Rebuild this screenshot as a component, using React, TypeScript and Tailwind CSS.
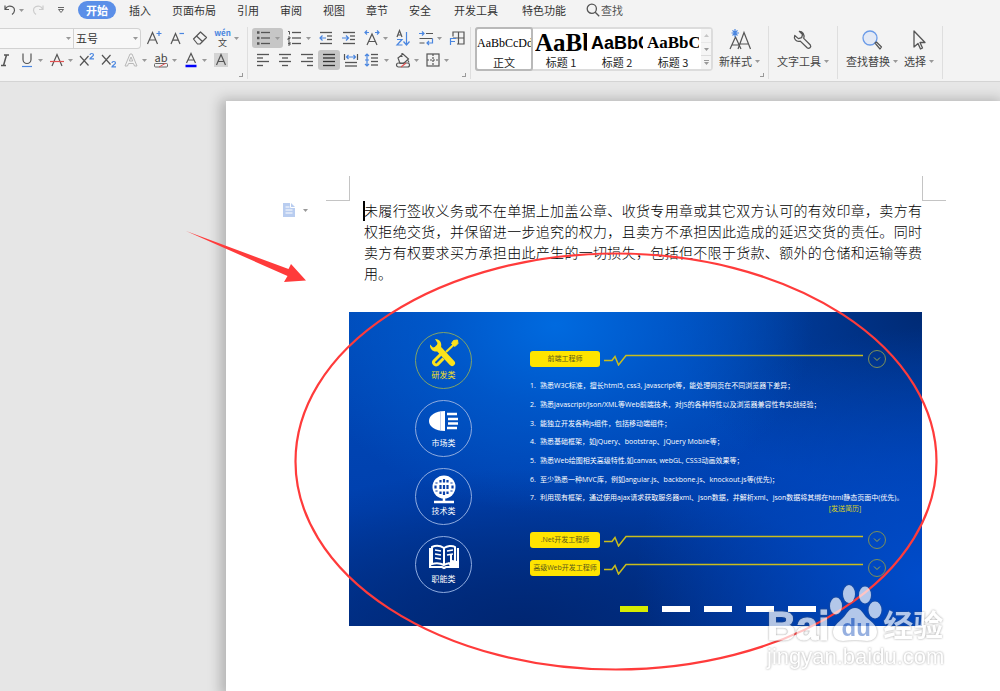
import React from "react";

type Kids = { children?: React.ReactNode };

const GRAY = "#555";
const BLUE = "#4a86e0";

function Icon({ children }: Kids) {
  return (
    <svg width="18" height="18" viewBox="0 0 18 18" fill="none" stroke={GRAY} strokeWidth="1.2" className="shrink-0">
      {children}
    </svg>
  );
}

function Caret() {
  return (
    <svg width="5" height="3" viewBox="0 0 5 3" className="shrink-0" fill="#999">
      <path d="M0 0h5L2.5 3z" />
    </svg>
  );
}

function Tool({
  label,
  size = "w-[22px]",
  menu = false,
  active = false,
  children,
}: Kids & { label: string; size?: string; menu?: boolean; active?: boolean }) {
  return (
    <button
      aria-label={label}
      title={label}
      className={`flex h-5 shrink-0 items-center rounded-[3px] ${active ? "bg-[#c6c6c6]" : ""}`}
    >
      <span className={`flex justify-center ${size}`}>{children}</span>
      {menu && (
        <span className="flex w-2">
          <Caret />
        </span>
      )}
    </button>
  );
}

const W = "w-[23px]";

function CornerMark() {
  return (
    <span className="flex h-2 items-start justify-end pr-1 pt-0.5">
      <span className="size-1 border-b border-r border-[#999]" />
    </span>
  );
}

function lines(rows: [number, number, number][], color = GRAY) {
  return rows.map(([x1, x2, y]) => <path key={`${x1}-${y}`} d={`M${x1} ${y}H${x2}`} stroke={color} strokeWidth="1.3" />);
}

function FontGroup() {
  return (
    <section className="w-[247px] shrink-0 overflow-hidden">
      <div className="flex h-[22px] items-center">
        <div className="mr-px flex h-[21px] rounded-r border-y border-r border-[#d2d2d2] bg-[#f8f8f8]">
          <label className="flex w-[73px] items-center pr-0.5">
            <select aria-label="字体" className="min-w-0 flex-1 appearance-none bg-transparent text-[11px] outline-none">
              <option></option>
            </select>
            <Caret />
          </label>
          <label className="flex w-[67px] items-center border-l border-[#d2d2d2] pl-0.5 pr-0.5">
            <select aria-label="字号" className="min-w-0 flex-1 appearance-none bg-transparent text-[11px] leading-4 outline-none">
              <option>五号</option>
            </select>
            <Caret />
          </label>
        </div>
        <Tool label="增大字号" size={W}>
          <Icon>
            <path d="M2.5 15 7.5 3.5 12.5 15M4.2 11h6.6" />
            <path d="M14 2v5M11.500 4.500h5" stroke={BLUE} />
          </Icon>
        </Tool>
        <Tool label="减小字号" size={W}>
          <Icon>
            <path d="M3 15 7.500 4.500 12 15M4.700 11.200h5.600" />
            <path d="M11.500 4.500H16" stroke={BLUE} />
          </Icon>
        </Tool>
        <Tool label="清除格式" size={W}>
          <Icon>
            <path d="m2.500 10 7-7 6 5.500-6.500 6.500H6.500zM5.500 7l6.500 6" strokeLinejoin="round" />
          </Icon>
        </Tool>
        <Tool label="拼音指南" size={W} menu>
          <span className="flex flex-col items-center">
            <span className="text-[8px] font-bold leading-[9px] text-[#4a86e0]">wén</span>
            <span className="text-[9px] leading-[11px] text-[#444]">文</span>
          </span>
        </Tool>
      </div>
      <div className="-ml-1.5 flex h-[22px] items-center">
        <Tool label="倾斜">
          <Icon>
            <path d="M8 4h5M5 14.500h5M10.500 4 7.500 14.500" strokeWidth="1.500" />
          </Icon>
        </Tool>
        <Tool label="下划线" menu>
          <Icon>
            <path d="M5 2.500v6a4 4 0 0 0 8 0v-6" />
            <path d="M4 15.500h10" stroke={BLUE} />
          </Icon>
        </Tool>
        <Tool label="删除线" menu>
          <Icon>
            <path d="M4 15 9 3.500 14 15" />
            <path d="M2 10.500h14" stroke="#e05252" />
          </Icon>
        </Tool>
        <Tool label="上标">
          <Icon>
            <path d="m2 5 8.500 9.500m0-9.500L2 14.500" />
            <path d="M12 4c0-2 3.500-2 3.500 0 0 1.300-3.500 2.500-3.500 3.800h4" stroke={BLUE} />
          </Icon>
        </Tool>
        <Tool label="下标">
          <Icon>
            <path d="m2 4 8.500 9.500M10.500 4 2 13.500" />
            <path d="M12 12c0-2 3.500-2 3.500 0 0 1.300-3.500 2.500-3.500 3.800h4" stroke={BLUE} />
          </Icon>
        </Tool>
        <Tool label="文字效果" menu>
          <Icon>
            <path d="M3 15 8 3h2l5 12h-2.500l-1-2.500h-5L5.500 15zM7.300 10h3.400L9 6z" stroke="#b8b8b8" strokeWidth="1" />
          </Icon>
        </Tool>
        <Tool label="突出显示" menu>
          <span className="flex flex-col text-[11px] leading-[11px] text-[#444]">
            ab
            <svg width="15" height="5" viewBox="0 0 15 5" fill="none" stroke="#666">
              <rect x=".5" y=".5" width="13" height="3.500" rx="1" />
              <path d="m5 4 7-4" stroke="#e05252" />
            </svg>
          </span>
        </Tool>
        <Tool label="字体颜色" menu>
          <Icon>
            <path d="M4.500 12 9 2.500 13.500 12M6.200 9h5.600" />
            <path d="M3.500 15h11" stroke="#0000fa" strokeWidth="2.500" />
          </Icon>
        </Tool>
        <Tool label="字符底纹">
          <Icon>
            <rect x="2" y="2" width="14" height="14" fill="#d4d4d4" stroke="none" />
            <path d="M4.500 14 9 3.500 13.500 14M6.200 10.500h5.600" />
          </Icon>
        </Tool>
      </div>
      <CornerMark />
    </section>
  );
}

function ParagraphGroup() {
  return (
    <section className="w-[223px] shrink-0 border-l border-[#dedede] pl-1">
      <div className="flex h-[22px] items-center">
        <Tool label="项目符号" size={W} menu active>
          <Icon>
            {lines([[6, 15, 3.5], [6, 15, 9], [6, 15, 14.5]])}
            <path d="M2 3.500h2.500M2 9h2.500M2 14.500h2.500" strokeWidth="2.500" />
          </Icon>
        </Tool>
        <Tool label="编号" size={W} menu>
          <Icon>
            {lines([[6, 15, 3.5], [6, 15, 9], [6, 15, 14.5]])}
            <path d="M2 2.500h1.500v3M2 8h2v1.500H2V11h2M2 13h2v3H2m0-1.500h2" strokeWidth="1" />
          </Icon>
        </Tool>
        <Tool label="减少缩进" size={W}>
          <Icon>
            {lines([[3, 15, 3.5], [10, 15, 7], [10, 15, 10.5], [3, 15, 14.5]])}
            <path d="M9 9H3m2.500-2.500L3 9l2.500 2.500" stroke={BLUE} />
          </Icon>
        </Tool>
        <Tool label="增加缩进" size={W}>
          <Icon>
            {lines([[3, 15, 3.5], [10, 15, 7], [10, 15, 10.5], [3, 15, 14.5]])}
            <path d="M2 9h6.500M6 6.500 8.500 9 6 11.500" stroke={BLUE} />
          </Icon>
        </Tool>
        <Tool label="字符缩放" size={W} menu>
          <Icon>
            <path d="M4 16 9 5l5 11M5.800 12.500h6.400" />
            <path d="M2 3.500h4M4 1.500l-2 2 2 2M16 3.500h-4M14 1.500l2 2-2 2" stroke={BLUE} />
          </Icon>
        </Tool>
        <Tool label="排序" size={W}>
          <Icon>
            <path d="M3 8 5.500 1.500 8 8M4 6h3" />
            <path d="M3 10.500h5L3 16h5.500M12.500 3v13M9.500 12.500l3 3.500 3-3.500" stroke={BLUE} />
          </Icon>
        </Tool>
        <Tool label="显示标记" size={W} menu>
          <Icon>
            <path d="M9 4.500h7M2.500 9.500h13M2.500 14h5" />
            <path d="M2 4.500h5M5 2.500l2 2-2 2M15.500 9.500V14H10m2-2-2 2 2 2" stroke={BLUE} />
          </Icon>
        </Tool>
        <Tool label="制表位" size={W}>
          <Icon>
            <path d="M5 7.500V3h11v12H9M10.500 3v12M5 9h11" />
            <path d="M2.500 16V9.500H8M2.500 12.500H7" stroke={BLUE} />
          </Icon>
        </Tool>
      </div>
      <div className="flex h-[22px] items-center">
        <Tool label="左对齐">
          <Icon>{lines([[3, 15, 3.5], [3, 9, 7], [3, 15, 10.5], [3, 9, 14.5]])}</Icon>
        </Tool>
        <Tool label="居中">
          <Icon>{lines([[3, 15, 3.5], [6, 12, 7], [3, 15, 10.5], [6, 12, 14.5]])}</Icon>
        </Tool>
        <Tool label="右对齐">
          <Icon>{lines([[3, 15, 3.5], [9, 15, 7], [3, 15, 10.5], [9, 15, 14.5]])}</Icon>
        </Tool>
        <Tool label="两端对齐" active>
          <Icon>{lines([[3, 15, 3.5], [3, 15, 7], [3, 15, 10.5], [3, 15, 14.5]], "#333")}</Icon>
        </Tool>
        <Tool label="分散对齐">
          <Icon>
            {lines([[3, 15, 11.5], [3, 15, 15]])}
            <path d="M2.500 3v6M15.500 3v6" />
            <path d="M4.500 6h9M6.500 4l-2 2 2 2M11.500 4l2 2-2 2" stroke={BLUE} />
          </Icon>
        </Tool>
        <Tool label="行距" menu>
          <Icon>
            {lines([[7, 14, 3.5], [7, 14, 7], [7, 14, 10.5], [7, 14, 14]])}
            <path d="M3 3v12M1 5l2-2 2 2M1 13l2 2 2-2M1 9h4" stroke={BLUE} />
          </Icon>
        </Tool>
        <Tool label="底纹颜色" menu>
          <Icon>
            <path d="m4 7 5-4 5.500 5-5 4.500H6zM8 2v4M14 9.500l1 2" />
            <rect x="2.500" y="12" width="13" height="4" rx="2" />
            <path d="m7 16 5-4" stroke="#e05252" />
          </Icon>
        </Tool>
        <Tool label="边框" menu>
          <Icon>
            <rect x="3" y="3" width="12" height="12" />
            <path d="M9 3v12M3 9h12" strokeDasharray="2 1" />
          </Icon>
        </Tool>
      </div>
      <CornerMark />
    </section>
  );
}

const styles = [
  { name: "正文", sample: "AaBbCcDd", look: "font-['Liberation_Serif',serif] text-[12px]" },
  { name: "标题 1", sample: "AaBb", look: "font-['Liberation_Serif',serif] text-[25px] font-bold" },
  { name: "标题 2", sample: "AaBbC", look: "font-['Liberation_Sans',sans-serif] text-[18px] font-bold" },
  { name: "标题 3", sample: "AaBbCc", look: "font-['Liberation_Serif',serif] text-[17px] font-bold" },
];

function BigTool({ label, children }: Kids & { label: string }) {
  return (
    <button className="flex shrink-0 flex-col items-start text-[11px] leading-4 text-[#444]">
      <span className="flex h-[26px] w-full items-center justify-center">{children}</span>
      <span className="flex items-center gap-[3px]">
        {label}
        <Caret />
      </span>
    </button>
  );
}

function StyleGroup() {
  return (
    <section className="flex shrink-0 items-end border-l border-[#dedede] pl-1">
      <div className="flex h-[44px] self-start rounded border-2 border-[#dcdcdc] bg-white">
        {styles.map((s, i) => (
          <button
            key={s.name}
            className={`-my-0.5 flex flex-col items-center justify-end overflow-hidden rounded-[3px] border-2 ${i === 0 ? "-ml-0.5 w-[58px] border-[#b9b9b9]" : "w-14 border-transparent"}`}
          >
            <span className={`flex h-6 w-full items-center overflow-hidden whitespace-nowrap leading-6 text-black ${s.look}`}>
              {s.sample}
            </span>
            <span className="text-[11px] leading-[14px] text-[#222]">{s.name}</span>
          </button>
        ))}
        <div className="flex w-[10px] flex-col divide-y divide-[#dcdcdc] bg-[#f5f5f5]">
          <button aria-label="上一行" className="flex flex-1 items-center justify-center opacity-50">
            <svg width="5" height="3" viewBox="0 0 5 3" fill="#999">
              <path d="M0 3h5L2.500 0z" />
            </svg>
          </button>
          <button aria-label="下一行" className="flex flex-1 items-center justify-center"><Caret /></button>
          <button aria-label="更多样式" className="flex flex-1 flex-col items-center justify-center gap-px">
            <span className="h-px w-[5px] bg-[#999]" />
            <Caret />
          </button>
        </div>
      </div>
      <div className="flex self-start pl-1.5">
        <BigTool label="新样式">
          <svg width="24" height="24" viewBox="0 0 24 24" fill="none" stroke={GRAY} strokeWidth="1.200">
            <path d="m2 21 5.500-12L13 21M4 17h7M10 21l6-16.500L22.500 21M12 16h9" />
            <path d="M7 1v8M3.500 5h7.500M4.500 2.300l5 5.200M9.500 2.300l-5 5.200" stroke={BLUE} />
          </svg>
        </BigTool>
      </div>
      <div className="w-2">
        <CornerMark />
      </div>
    </section>
  );
}

function Ribbon() {
  const first = ["开始", "插入", "页面布局", "引用", "审阅", "视图", "章节", "安全"];
  const second = ["开发工具", "特色功能"];
  return (
    <header className="relative z-10 overflow-hidden border-b border-[#d4d4d4] bg-[#f3f3f3] pb-0.5 text-[#333]">
      <nav className="flex h-5 items-center text-[11px]">
        <div className="flex w-[78px] shrink-0 items-center">
          <button aria-label="撤销" className="flex w-6 items-center justify-between pl-1">
            <svg width="12" height="12" viewBox="0 0 12 12" fill="none" stroke="#555" strokeWidth="1.200">
              <path d="M1 1.500v4h4M1.500 5C3 2 6 1.500 8.500 2.800c3 1.700 2.500 5.500-.5 7.700" />
            </svg>
            <Caret />
          </button>
          <button aria-label="恢复" className="flex w-7 justify-center">
            <svg width="12" height="12" viewBox="0 0 12 12" fill="none" stroke="#ccc" strokeWidth="1.200">
              <path d="M11 1.500v4H7M10.500 5C9 2 6 1.500 3.500 2.800.5 4.500 1 8.300 4 10.500" />
            </svg>
          </button>
          <button aria-label="自定义快速访问" className="flex flex-col items-center gap-px pl-1.5">
            <span className="h-px w-1.5 bg-[#666]" />
            <svg width="6" height="4" viewBox="0 0 6 4" fill="none" stroke="#666"><path d="m.5.500 2.500 3 2.500-3z" /></svg>
          </button>
        </div>
        <div className="flex shrink-0 gap-[5px]">
          {first.map((t, i) => (
            <button key={t} className={`h-[18px] rounded-full px-2 leading-4 ${i === 0 ? "bg-[#5b8fe8] font-bold text-white" : ""}`}>
              {t}
            </button>
          ))}
        </div>
        <div className="flex shrink-0 gap-2 pl-[7px]">
          {second.map((t) => (
            <button key={t} className="h-[18px] px-2 leading-4">
              {t}
            </button>
          ))}
          <button className="-ml-1 flex h-[18px] items-center gap-px px-2 leading-4 text-[#555]">
            <svg width="14" height="14" viewBox="0 0 14 14" fill="none" stroke="#555" strokeWidth="1.300">
              <circle cx="5.800" cy="5.800" r="4.600" />
              <path d="m9.200 9.200 4 4" />
            </svg>
            查找
          </button>
        </div>
      </nav>
      <div className="mt-1.5 flex h-[53px]">
        <div className="flex pt-px">
          <FontGroup />
          <ParagraphGroup />
          <StyleGroup />
        </div>
        <div className="flex shrink-0 border-l border-[#dedede] px-2 pt-px">
          <BigTool label="文字工具">
            <svg width="22" height="22" viewBox="0 0 24 24" fill="none" stroke={GRAY} strokeWidth="1.400" strokeLinejoin="round">
              <path d="M8 2.500 11.500 6 10.500 9.500 7 10.500 3 7C1.500 10.500 4.500 14.500 9 13.200l7.500 7.300c2 1.800 5-.8 3.500-3l-7.200-7.300C14 6 11.500 2.500 8 2.500z" />
            </svg>
          </BigTool>
        </div>
        <div className="flex shrink-0 gap-1.5 border-x border-[#dedede] px-2 pt-px">
          <BigTool label="查找替换">
            <svg width="22" height="22" viewBox="0 0 22 22" fill="none">
              <circle cx="9" cy="9" r="7" fill="#e3e9f5" stroke="#6b9be8" strokeWidth="1.300" />
              <path d="m14 14 1.500-1 5 5-1.500 2z" stroke="#555" strokeWidth="1.200" strokeLinejoin="round" />
            </svg>
          </BigTool>
          <BigTool label="选择">
            <svg width="22" height="22" viewBox="0 0 22 22" fill="none" stroke={GRAY} strokeWidth="1.300" strokeLinejoin="round">
              <path d="M6 2v16l4-3.500 2.500 5.500 2-1-2.500-5.500H17z" />
            </svg>
          </BigTool>
        </div>
      </div>
    </header>
  );
}

const categories: { name: string; art: React.ReactNode }[] = [
  {
    name: "研发类",
    art: (
      <>
        <path d="m9 9 14 15" stroke="currentColor" strokeWidth="6" strokeLinecap="round" />
        <path d="M6 0c5 0 7 4 6 8.500l-4 4C4 13 .500 10 1 5.500l3 3 3.500-1L8.500 4z" fill="currentColor" />
        <path d="M26 4.500 17 13" stroke="currentColor" strokeWidth="2.200" />
        <path d="m22.500 4.500 2-3 4-.500.5 3.500-3 3z" fill="currentColor" stroke="currentColor" />
        <path d="m12 15-7 7c-1.500 2 1 5 3.500 3.500l6-6" stroke="currentColor" strokeWidth="3" />
      </>
    ),
  },
  {
    name: "市场类",
    art: (
      <>
        <path d="M16 4v20C6 24 0 19.500 0 14S6 4 16 4z" fill="currentColor" />
        <path d="M11.500 4v20" stroke="#a9bfe8" strokeWidth=".700" />
        <path d="M18 7h10M19 12h10M19 16.500h10M18 21h10" stroke="currentColor" strokeWidth="2.400" />
      </>
    ),
  },
  {
    name: "技术类",
    art: (
      <>
        <circle cx="15" cy="12" r="11.500" fill="currentColor" />
        <path
          d="M11.500 5v2.500M15 4v3.500M18.500 5v2.500M11.500 10v4M15 10v4M18.500 10v4M11.500 16.500V19M15 16.500V20M18.500 16.500V19M7.500 7.500v1M22.500 7.500v1M6.500 10.500v3M23.500 10.500v3M7.500 15.500v1M22.500 15.500v1"
          stroke="#0a40a8"
          strokeWidth="2.200"
        />
        <path d="M15 23v4M5 27h20" stroke="currentColor" strokeWidth="2.500" />
      </>
    ),
  },
  {
    name: "职能类",
    art: (
      <>
        <path d="M3 4c4-2 9-1 12 1 3-2 8-3 11-1v17c-4-1-8-1-11 1-4-2-8-2-12-1zM15 5v17" stroke="currentColor" strokeWidth="2" />
        <path d="M1 5v19h12l2 1 2-1h12V5" stroke="currentColor" strokeWidth="2.200" />
        <path d="m6 7 6 1M6 11l6 1M6 15l6 1M24 7l-6 1M24 11l-6 1" stroke="currentColor" strokeWidth="1.500" />
        <path d="M21 12c1-1 2-1 2 0v5l5 1v6h-7l-2-5 2 1z" fill="currentColor" />
      </>
    ),
  },
];

const skills = [
  "熟悉W3C标准，擅长html5, css3, javascript等，能处理网页在不同浏览器下差异；",
  "熟悉javascript/Json/XML等Web前端技术，对JS的各种特性以及浏览器兼容性有实战经验；",
  "能独立开发各种js组件，包括移动端组件；",
  "熟悉基础框架，如jQuery、bootstrap、jQuery Mobile等；",
  "熟悉Web绘图相关高级特性,如canvas, webGL, CSS3动画效果等；",
  "至少熟悉一种MVC库，例如angular.js、backbone.js、knockout.js等(优先)；",
  "利用现有框架，通过使用ajax请求获取服务器xml、json数据，并解析xml、json数据将其绑在html静态页面中(优先)。",
];

function Position({ title }: { title: string }) {
  return (
    <div className="flex h-5 items-center">
      <button className="h-4 w-[70px] shrink-0 whitespace-nowrap rounded-[3px] bg-[#ffe400] text-center text-[7px] leading-4 text-[#5c5a1c]">
        {title}
      </button>
      <svg width="259" height="14" viewBox="0 0 259 14" fill="none" stroke="#c9bd1c" strokeWidth="1.500" className="ml-1 shrink-0">
        <path d="M0 8.500h8l3-4 3.500 8.500L22 3.500h237" />
      </svg>
      <button aria-label={`展开${title}`} className="ml-[5px] flex size-[18px] items-center justify-center rounded-full border border-[#7d9058]">
        <svg width="8" height="5" viewBox="0 0 8 5" fill="none" stroke="#9aa548">
          <path d="m1 .500 3 3 3-3" />
        </svg>
      </button>
    </div>
  );
}

function Poster() {
  return (
    <figure className="flex w-[573px] bg-[radial-gradient(ellipse_45%_60%_at_36%_4%,#006adf_0%,#0060d4a0_45%,transparent_100%),radial-gradient(ellipse_50%_80%_at_100%_85%,#004ccb_0%,transparent_100%),radial-gradient(ellipse_45%_60%_at_100%_0%,#002a74_0%,transparent_100%),radial-gradient(ellipse_60%_50%_at_30%_100%,#002672_0%,transparent_100%),linear-gradient(175deg,#004ab8_0%,#0040ae_55%,#003088_100%)] pb-3.5 pl-[66px] pt-5 font-['Open_Sans','Noto_Sans_CJK_SC',sans-serif]">
      <ul className="flex flex-col gap-[11px]">
        {categories.map((c, i) => (
          <li key={c.name}>
            <button
              className={`flex size-[57px] flex-col items-center rounded-full border pt-1.5 text-[8px] leading-[10px] ${i === 0 ? "border-[#7fa368] text-[#fbe21b]" : "border-[#8fabdf] text-white"}`}
            >
              <svg width="30" height="29" viewBox="0 0 30 29" fill="none">
                {c.art}
              </svg>
              <span className="pt-0.5">{c.name}</span>
            </button>
          </li>
        ))}
      </ul>
      <div className="flex flex-col pl-[58px] pt-[17px]">
        <Position title="前端工程师" />
        <ol className="mt-2 grid h-[131px] grid-rows-7 whitespace-nowrap text-[7px] text-white">
          {skills.map((s, i) => (
            <li key={s} className="flex items-center">
              <span className="w-2.5">{i + 1}.</span>
              {s}
            </li>
          ))}
        </ol>
        <a href="#resume" className="-mt-1 mr-[42px] self-end text-[7px] leading-[10px] text-[#d8d21e]">
          [发送简历]
        </a>
        <div className="mt-4 flex flex-col gap-2">
          <Position title=".Net开发工程师" />
          <Position title="高级Web开发工程师" />
        </div>
        <div className="mt-7 flex gap-3.5 pl-[90px]">
          {[0, 1, 2, 3, 4].map((n) => (
            <button key={n} aria-label={`第${n + 1}页`} className={`h-1.5 w-7 ${n === 0 ? "bg-[#d6ec00]" : "bg-white"}`} />
          ))}
        </div>
      </div>
    </figure>
  );
}

function Document() {
  return (
    <main className="ml-[226px] mt-[19px] flex-1 bg-white pt-[75px] shadow-[-2px_2px_12px_4px_rgba(0,0,0,0.22)]">
      <div className="ml-[100px] flex w-[620px] justify-between">
        <span className="h-[25px] w-6 border-b border-r border-[#c4c4c4]" />
        <span className="h-[25px] w-6 border-b border-l border-[#c4c4c4]" />
      </div>
      <div className="-mt-0.5 flex pl-[57px]">
        <button aria-label="段落布局" className="flex h-[22px] w-[80px] shrink-0 items-center gap-2">
          <svg width="12" height="14" viewBox="0 0 12 14" fill="none">
            <path d="M0 0h8l4 4v10H0z" fill="#b9cdf0" />
            <path d="M2.500 4h4M2.500 7h7M2.500 10h7M7.500 0v4.500H12" stroke="#fff" />
          </svg>
          <Caret />
        </button>
        <div className="flex w-[559px]">
          <span className="mt-0.5 h-5 w-0.5 shrink-0 bg-black" />
          <p className="-ml-px flex-1 pt-px text-justify text-[14px] font-light leading-[21px] text-black">
            未履行签收义务或不在单据上加盖公章、收货专用章或其它双方认可的有效印章，卖方有权拒绝交货，并保留进一步追究的权力，且卖方不承担因此造成的延迟交货的责任。同时卖方有权要求买方承担由此产生的一切损失，包括但不限于货款、额外的仓储和运输等费用。
          </p>
        </div>
      </div>
      <div className="ml-[123px] mt-7">
        <Poster />
      </div>
    </main>
  );
}

function Annotations() {
  return (
    <svg width="1000" height="691" viewBox="0 0 1000 691" fill="none" className="pointer-events-none absolute left-0 top-0 z-20">
      <path d="m186 231 102.500 38 2.500-5 15 16.500-22 1.500 3.500-6z" fill="#ff3b3b" />
      <ellipse cx="616" cy="461.500" rx="320.500" ry="208" stroke="#ff3b3b" strokeWidth="2.200" />
    </svg>
  );
}

function Watermark() {
  return (
    <div className="pointer-events-none absolute left-[767px] top-[583px] z-30 w-[180px] font-['Liberation_Sans','Noto_Sans_CJK_SC',sans-serif] text-white opacity-70 [filter:drop-shadow(0_0_1px_rgba(90,90,90,0.8))]">
      <div className="flex h-[60px] items-end font-bold">
        <span className="text-[40px] leading-[34px] [-webkit-text-stroke:1px_#fff]">Bai</span>
        <span className="relative flex h-[60px] w-[54px] items-end justify-center">
          <svg width="54" height="60" viewBox="0 0 54 60" fill="currentColor" className="absolute left-0 top-0">
            <ellipse cx="7" cy="23" rx="6" ry="8.500" />
            <ellipse cx="20" cy="11" rx="6" ry="9" />
            <ellipse cx="36" cy="12" rx="6" ry="8.500" />
            <ellipse cx="46" cy="27" rx="6.500" ry="8.500" />
            <path d="M26 25c6 0 8 6 12 10 6 5 10 8 10 14s-5 9-10 9c-4 0-7-1-12-1s-8 1-12 1c-5 0-10-3-10-9s5-9 10-14c4-4 6-10 12-10z" />
          </svg>
          <span className="relative text-[24px] leading-[30px] text-[#6b8fd4]">du</span>
        </span>
        <span className="text-[30px] leading-[34px]">经验</span>
      </div>
      <div className="pt-0.5 text-[22px] leading-6">jingyan.baidu.com</div>
    </div>
  );
}

export default function App() {
  return (
    <div className="relative flex min-h-screen flex-col overflow-hidden bg-[#e6e6e6] font-['Noto_Sans_CJK_SC',sans-serif]">
      <Ribbon />
      <Document />
      <Annotations />
      <Watermark />
    </div>
  );
}
